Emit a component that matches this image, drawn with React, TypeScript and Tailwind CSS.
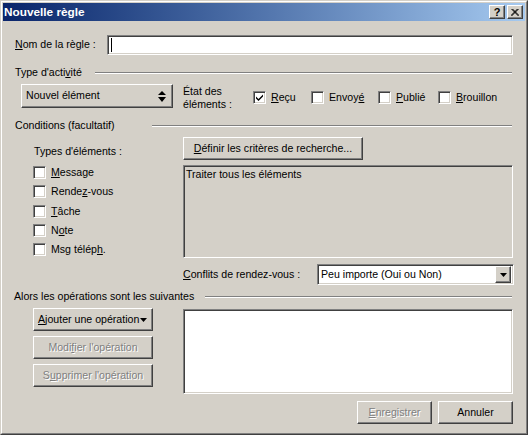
const raised = "border border-t-white border-l-white border-r-[#404040] border-b-[#404040] bg-[#d4d0c8] shadow-[inset_-1px_-1px_0_#808080]";
const sunken = "border border-t-[#808080] border-l-[#808080] border-r-white border-b-white shadow-[inset_1px_1px_0_#404040,inset_-1px_-1px_0_#d4d0c8]";

function Heading({ children, width, className = "pl-[12px]" }: { children: React.ReactNode; width: number; className?: string }) {
  return (
    <div className={`flex h-[14px] items-center pr-[13px] ${className}`}>
      <span className="shrink-0 whitespace-nowrap leading-[14px]" style={{ width }}>{children}</span>
      <div className="mt-[2px] h-[2px] flex-1 border-t border-b border-t-[#808080] border-b-white" />
    </div>
  );
}

function Check({ checked, label, className = "" }: { checked?: boolean; label: React.ReactNode; className?: string }) {
  return (
    <div className={`flex h-[13px] items-center ${className}`}>
      <div className={`${sunken} flex h-[13px] w-[13px] shrink-0 items-center justify-center bg-white`}>
        {checked && (
          <svg width="9" height="9" viewBox="0 0 9 9">
            <path d="M1 3.5 L3.5 6 L8 1.5 V3.5 L3.5 8 L1 5.5 Z" fill="#000" />
          </svg>
        )}
      </div>
      <span className="ml-[5px] whitespace-nowrap leading-[13px]">{label}</span>
    </div>
  );
}

function Btn({ children, disabled, className = "" }: { children: React.ReactNode; disabled?: boolean; className?: string }) {
  return (
    <div className={`${raised} flex h-[23px] items-center justify-center whitespace-nowrap ${disabled ? "text-[#808080] [text-shadow:1px_1px_0_#fff]" : ""} ${className}`}>
      {children}
    </div>
  );
}

export default function App() {
  return (
    <div className="h-[435px] w-[528px] overflow-hidden border border-t-[#d4d0c8] border-l-[#d4d0c8] border-r-[#404040] border-b-[#404040] bg-[#d4d0c8] text-[10.6px] text-black [font-family:'Liberation_Sans',sans-serif]">
      <div className="h-full border border-t-white border-l-white border-r-[#808080] border-b-[#808080] p-px">
        {/* title bar */}
        <div className="flex h-[18px] items-center justify-between bg-gradient-to-r from-[#0a246a] to-[#a6caf0] pl-[1px] pr-[2px]">
          <span className="pt-px text-[11.8px] font-bold leading-none text-white">Nouvelle règle</span>
          <div className="flex">
            <div className={`${raised} flex h-[14px] w-[16px] items-center justify-center text-[11px] font-bold leading-none`}>?</div>
            <div className={`${raised} ml-[2px] flex h-[14px] w-[16px] items-center justify-center`}>
              <svg width="8" height="7" viewBox="0 0 8 7">
                <path d="M0.5 0 L7.5 7 M7.5 0 L0.5 7 M1.5 0 L8 6.5 M6.5 0 L0 6.5" stroke="#000" strokeWidth="1" />
              </svg>
            </div>
          </div>
        </div>

        {/* nom */}
        <div className="mt-[14px] flex h-[20px] items-center pl-[12px]">
          <span className="w-[92px] shrink-0"><u>N</u>om de la règle :</span>
          <div className={`${sunken} flex h-[20px] w-[406px] items-center bg-white pl-[3px]`}>
            <div className="h-[14px] w-px bg-black" />
          </div>
        </div>

        {/* type d'activité */}
        <div className="mt-[10px]">
          <Heading width={80}>Type d'acti<u>v</u>ité</Heading>
        </div>
        <div className="mt-[5px] flex h-[24px] pl-[18px]">
          <div className={`${raised} flex h-[24px] w-[152px] shrink-0 items-center justify-between pl-[4px] pr-[6px]`}>
            <span>Nouvel élément</span>
            <svg width="8" height="11" viewBox="0 0 8 11">
              <path d="M4 0 L8 4 H0 Z M0 6 H8 L4 11 Z" fill="#000" />
            </svg>
          </div>
          <div className="ml-[10px] mt-[1px] w-[70px] shrink-0 leading-[13px]">État des<br />éléments :</div>
          <div className="mt-[7px] flex h-[13px]">
            <Check checked label={<><u>R</u>eçu</>} className="w-[58px]" />
            <Check label={<>Envoy<u>é</u></>} className="w-[67px]" />
            <Check label={<><u>P</u>ublié</>} className="w-[60px]" />
            <Check label={<><u>B</u>rouillon</>} />
          </div>
        </div>

        {/* conditions */}
        <div className="mt-[10px]">
          <Heading width={137}>Conditions (facultatif)</Heading>
        </div>
        <div className="mt-[5px] flex pl-[30px]">
          <div className="w-[150px] shrink-0 pt-[7px]">
            <div className="ml-px h-[14px] leading-[14px]">Types d'éléments :</div>
            <div className="mt-[8px] flex flex-col gap-[6.25px]">
              <Check label={<><u>M</u>essage</>} />
              <Check label={<>Rende<u>z</u>-vous</>} />
              <Check label={<><u>T</u>âche</>} />
              <Check label={<>N<u>o</u>te</>} />
              <Check label={<>Msg télép<u>h</u>.</>} />
            </div>
          </div>
          <div className="w-[330px] shrink-0">
            <Btn className="w-[180px]"><span><u>D</u>éfinir les critères de recherche...</span></Btn>
            <div className={`${sunken} mt-[5px] h-[93px] pl-[2px] pt-px leading-[14px]`}>Traiter tous les éléments</div>
            <div className="mt-[6px] flex h-[21px] items-center">
              <span className="w-[134px] shrink-0 whitespace-nowrap"><u>C</u>onflits de rendez-vous :</span>
              <div className={`${sunken} flex h-[21px] w-[197px] shrink-0 items-center justify-between bg-white pl-[3px] pr-[2px]`}>
                <span>Peu importe (Oui ou Non)</span>
                <div className={`${raised} flex h-[17px] w-[16px] items-center justify-center`}>
                  <svg width="7" height="4" viewBox="0 0 7 4"><path d="M0 0 H7 L3.5 4 Z" fill="#000" /></svg>
                </div>
              </div>
            </div>
          </div>
        </div>

        {/* opérations */}
        <div className="mt-[4px]">
          <Heading width={191} className="pl-[11px]">Alors les opérations sont les suivantes</Heading>
        </div>
        <div className="mt-[5px] flex pl-[30px]">
          <div className="flex w-[150px] shrink-0 flex-col gap-[5px]">
            <Btn className="w-[120px] !justify-start pl-[4px]">
              <span><u>A</u>jouter une opération</span>
              <svg className="ml-px" width="7" height="4" viewBox="0 0 7 4"><path d="M0 0 H7 L3.5 4 Z" fill="#000" /></svg>
            </Btn>
            <Btn disabled className="w-[120px]"><span>Modi<u>f</u>ier l'opération</span></Btn>
            <Btn disabled className="w-[120px]"><span>S<u>u</u>pprimer l'opération</span></Btn>
          </div>
          <div className={`${sunken} mt-px h-[85px] w-[330px] shrink-0 bg-white`} />
        </div>

        {/* pied */}
        <div className="mt-[7px] flex justify-end gap-[6px] pr-[12px]">
          <Btn disabled className="w-[75px]"><span><u>E</u>nregistrer</span></Btn>
          <Btn className="w-[75px]"><span>Annuler</span></Btn>
        </div>
      </div>
    </div>
  );
}
